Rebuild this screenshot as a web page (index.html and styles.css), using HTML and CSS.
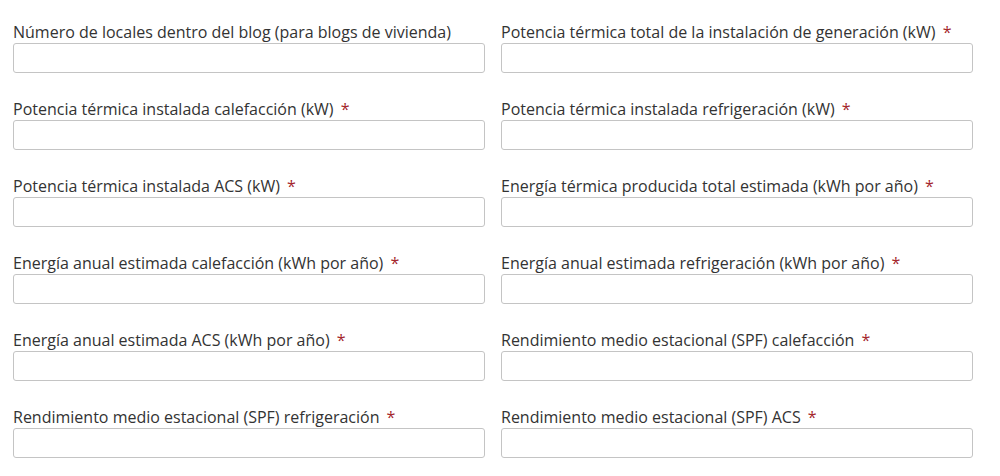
FILE: index.html
```html
<!DOCTYPE html>
<html lang="es">
<head>
<meta charset="utf-8">
<link rel="stylesheet" href="styles.css">
</head>
<body>
<form class="form-grid">
  <div class="field">
    <label class="label">Número de locales dentro del blog (para blogs de vivienda)</label>
    <input class="input" type="text">
  </div>
  <div class="field">
    <label class="label">Potencia térmica total de la instalación de generación (kW) <span class="req">*</span></label>
    <input class="input" type="text">
  </div>
  <div class="field">
    <label class="label">Potencia térmica instalada calefacción (kW) <span class="req">*</span></label>
    <input class="input" type="text">
  </div>
  <div class="field">
    <label class="label">Potencia térmica instalada refrigeración (kW) <span class="req">*</span></label>
    <input class="input" type="text">
  </div>
  <div class="field">
    <label class="label">Potencia térmica instalada ACS (kW) <span class="req">*</span></label>
    <input class="input" type="text">
  </div>
  <div class="field">
    <label class="label">Energía térmica producida total estimada (kWh por año) <span class="req">*</span></label>
    <input class="input" type="text">
  </div>
  <div class="field">
    <label class="label">Energía anual estimada calefacción (kWh por año) <span class="req">*</span></label>
    <input class="input" type="text">
  </div>
  <div class="field">
    <label class="label">Energía anual estimada refrigeración (kWh por año) <span class="req">*</span></label>
    <input class="input" type="text">
  </div>
  <div class="field">
    <label class="label">Energía anual estimada ACS (kWh por año) <span class="req">*</span></label>
    <input class="input" type="text">
  </div>
  <div class="field">
    <label class="label">Rendimiento medio estacional (SPF) calefacción <span class="req">*</span></label>
    <input class="input" type="text">
  </div>
  <div class="field">
    <label class="label">Rendimiento medio estacional (SPF) refrigeración <span class="req">*</span></label>
    <input class="input" type="text">
  </div>
  <div class="field">
    <label class="label">Rendimiento medio estacional (SPF) ACS <span class="req">*</span></label>
    <input class="input" type="text">
  </div>
</form>
</body>
</html>
```
FILE: styles.css
```css
html, body {
  margin: 0;
  padding: 0;
  background: #ffffff;
}
body {
  font-family: "Open Sans", "Liberation Sans", sans-serif;
  font-size: 16px;
  color: #333333;
}
.form-grid {
  display: grid;
  grid-template-columns: 472px 472px;
  column-gap: 16px;
  row-gap: 25px;
  padding: 21px 0 0 13px;
  margin: 0;
}
.field {
  display: flex;
  flex-direction: column;
}
.label {
  display: block;
  line-height: 22px;
  margin-bottom: 0;
}
.req {
  color: #a4262c;
  margin-left: 3px;
}
.input {
  box-sizing: border-box;
  width: 100%;
  height: 30px;
  margin: 0;
  border: 1px solid #c4c4c4;
  border-radius: 3px;
  background: #fff;
  font: inherit;
  padding: 0 8px;
}
```
